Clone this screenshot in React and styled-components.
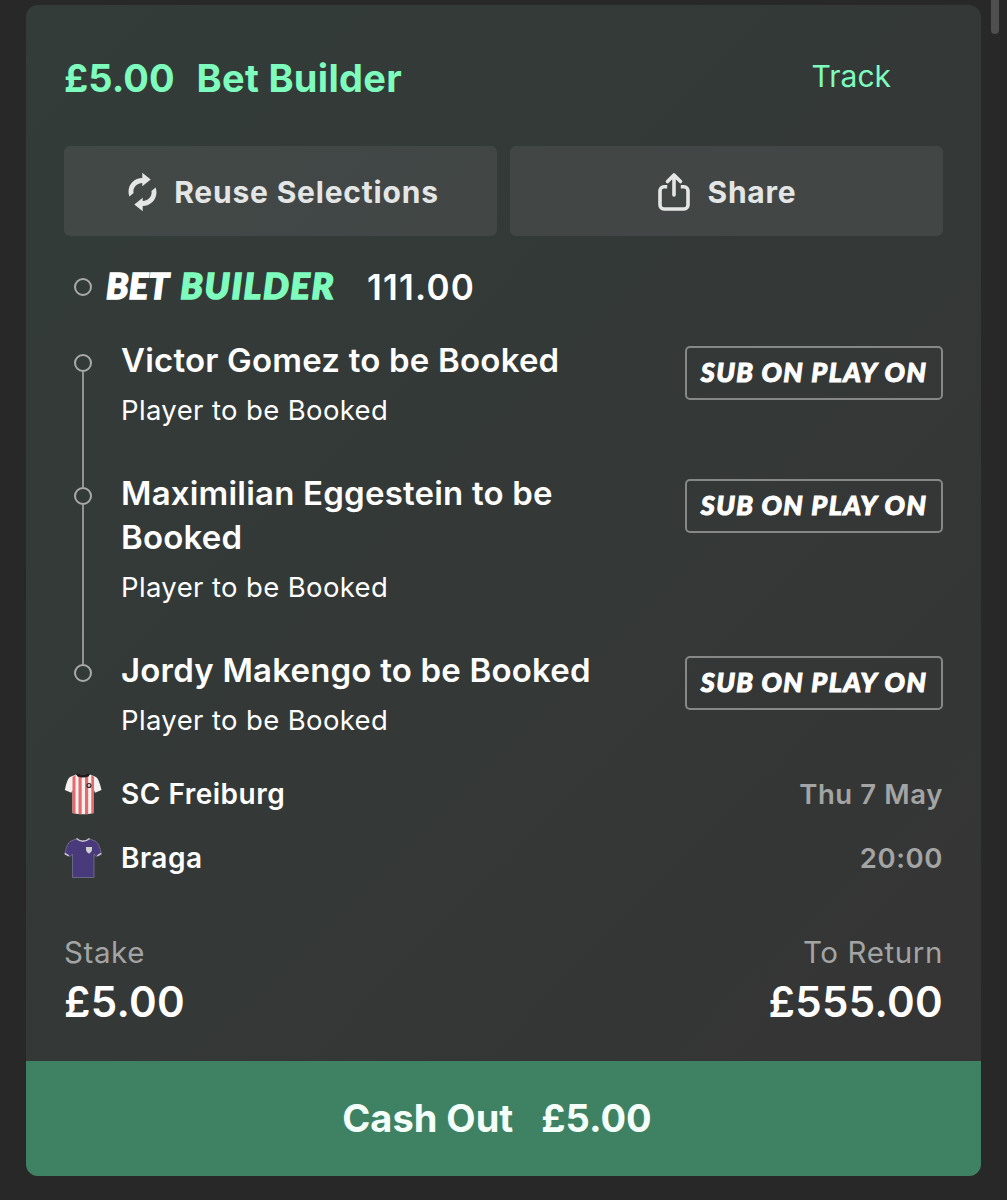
import React from 'react'
import styled, { createGlobalStyle } from 'styled-components'

const GlobalStyle = createGlobalStyle`
  * {
    box-sizing: border-box;
  }

  body {
    margin: 0;
    background: #282828;
    color: #fff;
    font-family: Inter, 'Liberation Sans', sans-serif;
  }
`

const Page = styled.div`
  display: flex;
  justify-content: space-between;
  height: 1200px;
  padding: 5px 8px 24px 26px;
  overflow: hidden;
`

const Card = styled.div`
  display: flex;
  flex-direction: column;
  width: 955px;
  border-radius: 12px;
  overflow: hidden;
  background: linear-gradient(135deg, #333c39 0%, #343837 55%, #353434 100%);
`

const ScrollThumb = styled.div`
  width: 8px;
  height: 34px;
  margin-top: -5px;
  border-radius: 0 0 4px 4px;
  background: #4f4f4f;
`

const Content = styled.div`
  flex: 1;
  padding: 52px 38px 0;
`

const Header = styled.div`
  display: flex;
  justify-content: space-between;
  height: 89px;
  padding-right: 52px;
  color: #7dfcbd;
`

const Title = styled.div`
  display: flex;
  gap: 22px;
  font-size: 38px;
  font-weight: 680;
  line-height: 43px;
`

const TitleType = styled.span`
  letter-spacing: 0.3px;
`

const Track = styled.div`
  font-size: 30px;
  line-height: 39px;
`

const Actions = styled.div`
  display: grid;
  grid-template-columns: 1fr 1fr;
  gap: 13px;
`

const ActionButton = styled.button`
  display: flex;
  align-items: center;
  justify-content: center;
  gap: 17px;
  height: 90px;
  padding: 1px 0 0 ${p => p.$inset || 2}px;
  border: 0;
  border-radius: 6px;
  background: rgba(255, 255, 255, 0.07);
  color: #e4e6e5;
  font: 680 30px Inter, sans-serif;
  letter-spacing: 0.8px;
`

const BuilderRow = styled.div`
  display: flex;
  align-items: center;
  height: 102px;
  padding-left: 10px;
`

const Dot = styled.div`
  flex: none;
  width: 18px;
  height: 18px;
  border: 2px solid #a9abaa;
  border-radius: 50%;
`

const BuilderLogo = styled.div`
  display: flex;
  gap: 11px;
  margin-left: 14px;
  padding-bottom: 4px;
  width: 230px;
  font: italic 900 36.5px/42px Lato, sans-serif;
  white-space: nowrap;
  letter-spacing: 0.2px;
  -webkit-text-stroke: 1.5px currentColor;
`

const Accent = styled.span`
  color: #7dfcbd;
  letter-spacing: 1.6px;
`

const Odds = styled.div`
  margin-left: 31px;
  font-size: 35px;
  font-weight: 560;
  letter-spacing: 1.2px;
`

const Leg = styled.div`
  display: flex;
  padding-left: 10px;
`

const Rail = styled.div`
  display: flex;
  flex-direction: column;
  align-items: center;
  width: 18px;
  margin-right: 29px;
`

const RailLine = styled.div`
  width: 2px;
  flex: ${p => (p.$lead ? '0 0 16px' : 1)};
  background: ${p => (p.$hidden ? 'transparent' : '#929493')};
`

const LegText = styled.div`
  width: 500px;
  padding-bottom: ${p => (p.$last ? 0 : 43)}px;
`

const LegTitle = styled.div`
  font-size: 33px;
  font-weight: 620;
  line-height: 44px;
  letter-spacing: 0.2px;
`

const LegMarket = styled.div`
  margin-top: 10px;
  font-size: 27.5px;
  line-height: 36px;
  letter-spacing: 0.37px;
`

const Badge = styled.div`
  width: 258px;
  height: 54px;
  margin: 8px 0 0 auto;
  border: 2.5px solid #858887;
  border-radius: 5px;
  font: italic 900 27px/48px Lato, sans-serif;
  text-align: center;
  white-space: nowrap;
  letter-spacing: 1.4px;
  -webkit-text-stroke: 1px currentColor;
`

const Fixture = styled.div`
  margin-top: 24px;
`

const Team = styled.div`
  display: flex;
  align-items: center;
  height: 64px;
  font-size: 28px;
  font-weight: 600;
  letter-spacing: 0.5px;

  svg {
    margin-right: 19px;
  }
`

const Kickoff = styled.div`
  margin-left: auto;
  color: #a3a4a4;
  font-size: 27.5px;
  letter-spacing: 0.6px;
`

const Totals = styled.div`
  display: flex;
  justify-content: space-between;
  margin-top: 43px;
`

const Total = styled.div`
  text-align: ${p => (p.$right ? 'right' : 'left')};
`

const TotalLabel = styled.div`
  color: #a3a4a4;
  font-size: 29.5px;
  line-height: 38px;
  letter-spacing: 0.6px;
`

const TotalValue = styled.div`
  margin-top: 6px;
  font-size: 42px;
  font-weight: 600;
  line-height: 50px;
  letter-spacing: 0.3px;
`

const CashOut = styled.button`
  display: flex;
  align-items: center;
  justify-content: center;
  gap: 28px;
  height: 115px;
  padding: 0 13px 1px 0;
  border: 0;
  background: #3f8263;
  color: #f4fffa;
  font: 680 38px Inter, sans-serif;
`

const ReuseIcon = () => (
  <svg width="29" height="40" viewBox="0 0 29 40" fill="#e4e6e5">
    <path d="M14.300 .8v5.200C6.600 6 .5 12.100 .5 19.700c0 1.900.4 3.500.9 4.800L5.600 21c-.2-.5-.2-1-.2-1.500 0-4.700 4-8.500 8.900-8.500v3.200L22.700 7.500z" />
    <path d="M14.700 39.200V34c7.700 0 13.800-6.100 13.800-13.700 0-1.900-.4-3.500-.9-4.800L23.400 19c.2.500.2 1 .2 1.500 0 4.700-4 8.500-8.900 8.500v-3.200L6.300 32.500z" />
  </svg>
)

const ShareIcon = () => (
  <svg
    width="32"
    height="40"
    viewBox="0 0 32 40"
    fill="none"
    stroke="#e4e6e5"
    strokeWidth="3.6"
    strokeLinejoin="round">
    <path d="M9.200 14.800H6a4 4 0 0 0-4 4V33a4 4 0 0 0 4 4h20a4 4 0 0 0 4-4V18.800a4 4 0 0 0-4-4h-3.200" />
    <path d="M16 23V3.500M9.500 9.500L16 3l6.500 6.500" strokeLinecap="round" />
  </svg>
)

const FreiburgShirt = () => (
  <svg width="38" height="42" viewBox="0 0 38 42">
    <path d="M12 1.500L6 4Q3 6 .8 17l6.500 2.700L8.500 17V40q10.500 2.500 21.500 0V17l1 2.700 6.500-2.700Q35 6 32 4l-6-2.500z" fill="#f4f1f1" />
    <path d="M8.500 4v36l3 .8V2zM14.500 3v38.200h3.200V4zM21 4v37.300h3.200V3zM27.300 2v38.600l2.700-.6V4z" fill="#e8686c" />
    <path d="M12 1.200l1.500 2.200q5.500 2.200 11 0L26 1.200l-1.500-.8q-5.500 1.800-11 0z" fill="#1f1b1b" />
    <circle cx="25" cy="12.500" r="2" fill="#d8caca" stroke="#2a2424" strokeWidth="1.200" />
  </svg>
)

const BragaShirt = () => (
  <svg width="38" height="42" viewBox="0 0 38 42">
    <path d="M12 2L6 4.500Q3 6.500 .8 17l5.500 2.500 2.200-2.500v23.500h21.500V17l2 2.500 5.500-2.500Q35 6.500 32 4.500L26 2q-7 4-14 0z" fill="#493a7c" stroke="#77718f" strokeWidth=".8" />
    <path d="M12.500 1.500q6.500 5.500 13 0" fill="none" stroke="#c9c5d2" strokeWidth="1.600" />
    <path d="M.8 16.500l4 2.300M37.200 16.500l-4 2.300" stroke="#c9c5d2" strokeWidth="1.500" />
    <path d="M22 10h6v3q-.5 2.600-3 3.800-2.500-1.200-3-3.800z" fill="#cfd0cf" />
  </svg>
)

const legs = [
  'Victor Gomez to be Booked',
  'Maximilian Eggestein to be Booked',
  'Jordy Makengo to be Booked'
]

export default function App() {
  return (
    <Page>
      <GlobalStyle />
      <Card>
        <Content>
          <Header>
            <Title>
              <span>£5.00</span>
              <TitleType>Bet Builder</TitleType>
            </Title>
            <Track>Track</Track>
          </Header>
          <Actions>
            <ActionButton $inset={6}>
              <ReuseIcon />
              Reuse Selections
            </ActionButton>
            <ActionButton>
              <ShareIcon />
              Share
            </ActionButton>
          </Actions>
          <BuilderRow>
            <Dot />
            <BuilderLogo>
              <span>BET</span>
              <Accent>BUILDER</Accent>
            </BuilderLogo>
            <Odds>111.00</Odds>
          </BuilderRow>
          {legs.map((leg, i) => {
            const last = i === legs.length - 1
            return (
              <Leg key={leg}>
                <Rail>
                  <RailLine $lead $hidden={i === 0} />
                  <Dot />
                  <RailLine $hidden={last} />
                </Rail>
                <LegText $last={last}>
                  <LegTitle>{leg}</LegTitle>
                  <LegMarket>Player to be Booked</LegMarket>
                </LegText>
                <Badge>SUB ON PLAY ON</Badge>
              </Leg>
            )
          })}
          <Fixture>
            <Team>
              <FreiburgShirt />
              SC Freiburg
              <Kickoff>Thu 7 May</Kickoff>
            </Team>
            <Team>
              <BragaShirt />
              Braga
              <Kickoff>20:00</Kickoff>
            </Team>
          </Fixture>
          <Totals>
            <Total>
              <TotalLabel>Stake</TotalLabel>
              <TotalValue>£5.00</TotalValue>
            </Total>
            <Total $right>
              <TotalLabel>To Return</TotalLabel>
              <TotalValue>£555.00</TotalValue>
            </Total>
          </Totals>
        </Content>
        <CashOut>
          <span>Cash Out</span>
          <span>£5.00</span>
        </CashOut>
      </Card>
      <ScrollThumb />
    </Page>
  )
}
